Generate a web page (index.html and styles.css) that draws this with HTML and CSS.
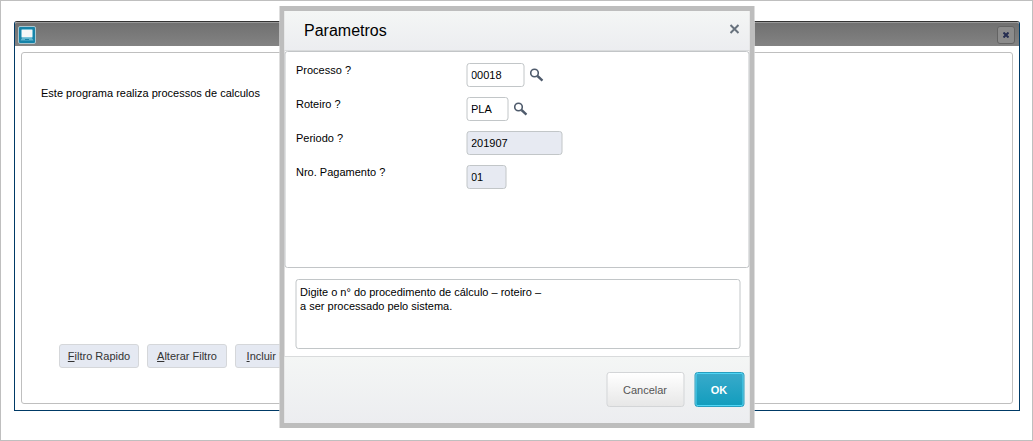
FILE: index.html
```html
<!DOCTYPE html>
<html lang="pt-BR">
<head>
  <meta charset="UTF-8" />
  <meta name="viewport" content="width=device-width, initial-scale=1" />
  <title>Parametros</title>
  <link rel="stylesheet" href="styles.css">
</head>
<body>

  <main class="window">
    <header class="window-bar">
      <svg class="app-icon" width="18" height="18" viewBox="0 0 18 18" aria-hidden="true">
        <rect x="0.5" y="0.5" width="17" height="17" rx="1.5" fill="#1683a8" stroke="#a9c6d0" />
        <rect x="3.5" y="3.5" width="11" height="8" rx="1" fill="#f4f6f7" stroke="#7cc3da" />
        <path d="M4 12h10l1.5 2.5h-13z" fill="#62b5cf" />
        <path d="M7 13h4v1H7z" fill="#1683a8" />
      </svg>
      <button type="button" class="window-close" aria-label="Fechar janela">
        <svg width="6" height="6" viewBox="0 0 6 6"><path d="M0.5 0.5l5 5M5.5 0.5l-5 5" stroke="#252d50" stroke-width="2" /></svg>
      </button>
    </header>
    <section class="window-panel">
      <p class="description">Este programa realiza processos de calculos</p>
      <div class="filters">
        <button type="button" class="btn-filter"><u>F</u>iltro Rapido</button>
        <button type="button" class="btn-filter"><u>A</u>lterar Filtro</button>
        <button type="button" class="btn-filter"><u>I</u>ncluir Filtro</button>
      </div>
    </section>
  </main>

  <form class="modal" role="dialog" aria-labelledby="modalTitle">
    <header class="modal-header">
      <h1 id="modalTitle">Parametros</h1>
      <button type="button" class="modal-close" aria-label="Fechar">
        <svg width="10" height="10" viewBox="0 0 10 10"><path d="M1 1l8 8M9 1l-8 8" stroke="#68727d" stroke-width="2" /></svg>
      </button>
    </header>

    <div class="fields">
      <div class="field">
        <label for="processo">Processo ?</label>
        <input type="text" id="processo" class="w-processo" value="00018">
        <button type="button" class="lookup" aria-label="Pesquisar processo">
          <svg width="14" height="14" viewBox="0 0 14 14" fill="none" stroke="#4f5b6c"><circle cx="5" cy="5" r="3.8" stroke-width="1.6" /><path d="M8 8l5 4.6" stroke-width="2.4" /></svg>
        </button>
      </div>
      <div class="field">
        <label for="roteiro">Roteiro ?</label>
        <input type="text" id="roteiro" class="w-roteiro" value="PLA">
        <button type="button" class="lookup" aria-label="Pesquisar roteiro">
          <svg width="14" height="14" viewBox="0 0 14 14" fill="none" stroke="#4f5b6c"><circle cx="5" cy="5" r="3.8" stroke-width="1.6" /><path d="M8 8l5 4.6" stroke-width="2.4" /></svg>
        </button>
      </div>
      <div class="field">
        <label for="periodo">Periodo ?</label>
        <input type="text" id="periodo" class="w-periodo" value="201907" readonly>
      </div>
      <div class="field">
        <label for="pagamento">Nro. Pagamento ?</label>
        <input type="text" id="pagamento" class="w-pagamento" value="01" readonly>
      </div>
    </div>

    <p class="help">Digite o n° do procedimento de cálculo – roteiro –<br>a ser processado pelo sistema.</p>

    <footer class="modal-footer">
      <button type="button" class="btn btn-cancel">Cancelar</button>
      <button type="submit" class="btn btn-ok">OK</button>
    </footer>
  </form>

</body>
</html>
```

FILE: styles.css
```css
* { box-sizing: border-box; }
body { margin: 0; min-height: 100vh; display: flex; flex-direction: column; position: relative; padding: 20px 12px 29px 13px; border: 1px solid #bfbfbf; background: #fff; color: #000; font-family: "Liberation Sans", Arial, sans-serif; font-size: 11px; line-height: 14px; }
h1, p { margin: 0; }
button, input { font: inherit; }
button { display: flex; align-items: center; justify-content: center; padding: 0; }
svg { display: block; }

/* main window */
.window { flex: 1; display: flex; flex-direction: column; border: 1px solid #003a66; border-top-color: #333; border-radius: 3px 3px 0 0; }
.window-bar { display: flex; align-items: center; justify-content: space-between; height: 24px; padding: 0 4px 0 3px; border-top: 1px solid #999; border-radius: 2px 2px 0 0; background: linear-gradient(#707070, #838383); }
.window-close { width: 18px; height: 18px; border: 1px solid #636363; border-radius: 3px; background: #8b8b8b; }
.window-panel { flex: 1; display: flex; flex-direction: column; justify-content: space-between; margin: 6px; padding: 33px 19px 35px; border: 1px solid #bfbfbf; border-radius: 3px; }
.filters { display: flex; gap: 8px; padding-left: 18px; }
.btn-filter { width: 80px; height: 24px; border: 1px solid #d5d7da; border-radius: 3px; background: #e5e9f2; color: #333; white-space: pre; }

/* parameters dialog */
.modal { position: absolute; top: 5px; left: 50%; transform: translateX(-50%); width: 475px; max-width: 100%; border: 5px solid #bdbdbd; background: #fff; }
.modal-header { display: flex; justify-content: space-between; height: 40px; padding: 0 10px 0 20px; border-bottom: 1px solid #d9dbdc; background: linear-gradient(#f4f6f5, #ecedf0); }
.modal-header h1 { font-size: 16px; font-weight: normal; line-height: 40px; }
.modal-close { width: 10px; height: 36px; border: 0; background: none; }
.fields { display: flex; flex-direction: column; gap: 10px; min-height: 217px; padding: 11px; border: 1px solid #c2c5c7; border-radius: 3px; }
.field { display: flex; align-items: flex-start; }
.field label { width: 170px; }
.field input { height: 24px; padding: 0 4px; border: 1px solid #c2c6c8; border-radius: 3px; background: #fff; color: #000; }
.field input:read-only { background: #e7eaf2; }
.field .w-processo { width: 58px; }
.field .w-roteiro { width: 42px; }
.field .w-periodo { width: 96px; }
.field .w-pagamento { width: 40px; }
.lookup { width: 14px; height: 24px; margin-left: 5px; border: 0; background: none; }
.help { min-height: 70px; margin: 11px 9px 7px 11px; padding: 5px 4px; border: 1px solid #c2c6c8; border-radius: 3px; }
.modal-footer { display: flex; justify-content: flex-end; gap: 10px; padding: 15px 5px 16px; border-top: 1px solid #d9dbdc; background: linear-gradient(#f4f6f5, #ecedf0); }
.btn { height: 35px; border-radius: 3px; }
.btn-cancel { width: 78px; border: 1px solid #d3d5d7; background: linear-gradient(#fff, #e7e7e7); color: #555; }
.btn-ok { width: 50px; border: 1px solid #279fc0; background: linear-gradient(#39aacb, #129dbd); box-shadow: inset 0 0 0 1px #4fd5f5; color: #fff; font-weight: bold; }
```
